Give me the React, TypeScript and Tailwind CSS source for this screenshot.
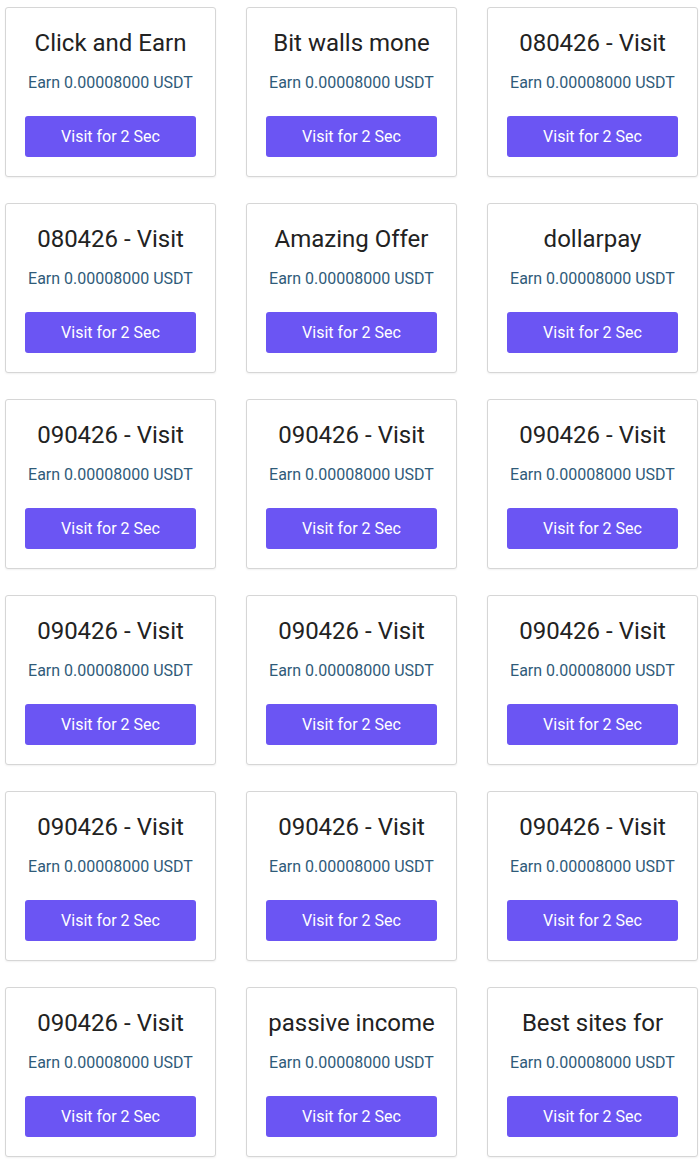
const titles = [
  "Click and Earn",
  "Bit walls mone",
  "080426 - Visit",
  "080426 - Visit",
  "Amazing Offer",
  "dollarpay",
  "090426 - Visit",
  "090426 - Visit",
  "090426 - Visit",
  "090426 - Visit",
  "090426 - Visit",
  "090426 - Visit",
  "090426 - Visit",
  "090426 - Visit",
  "090426 - Visit",
  "090426 - Visit",
  "passive income",
  "Best sites for",
];

const OfferCard = ({ title }: { title: string }) => (
  <div className="flex h-[170px] flex-col items-center rounded-[3px] border border-[#d6d6d6] bg-white px-3 pt-[21px] shadow-[0_1px_2px_rgba(0,0,0,0.06)]">
    <h3 className="whitespace-nowrap text-[24px] leading-[28px] text-[#222222]">{title}</h3>
    <p className="mt-[14px] text-[16px] leading-[24px] text-[#2f5b79]">Earn 0.00008000 USDT</p>
    <button className="mt-[21px] h-[41px] w-[171px] rounded-[3px] bg-[#6b55f3] text-[16px] text-white">
      Visit for 2 Sec
    </button>
  </div>
);

export default function App() {
  return (
    <div className="min-h-[1176px] w-[700px] bg-white font-['Roboto',sans-serif]">
      <div className="grid grid-cols-[repeat(3,211px)] gap-x-[30px] gap-y-[26px] pl-[5px] pt-[7px]">
        {titles.map((title, i) => (
          <OfferCard key={i} title={title} />
        ))}
      </div>
    </div>
  );
}
